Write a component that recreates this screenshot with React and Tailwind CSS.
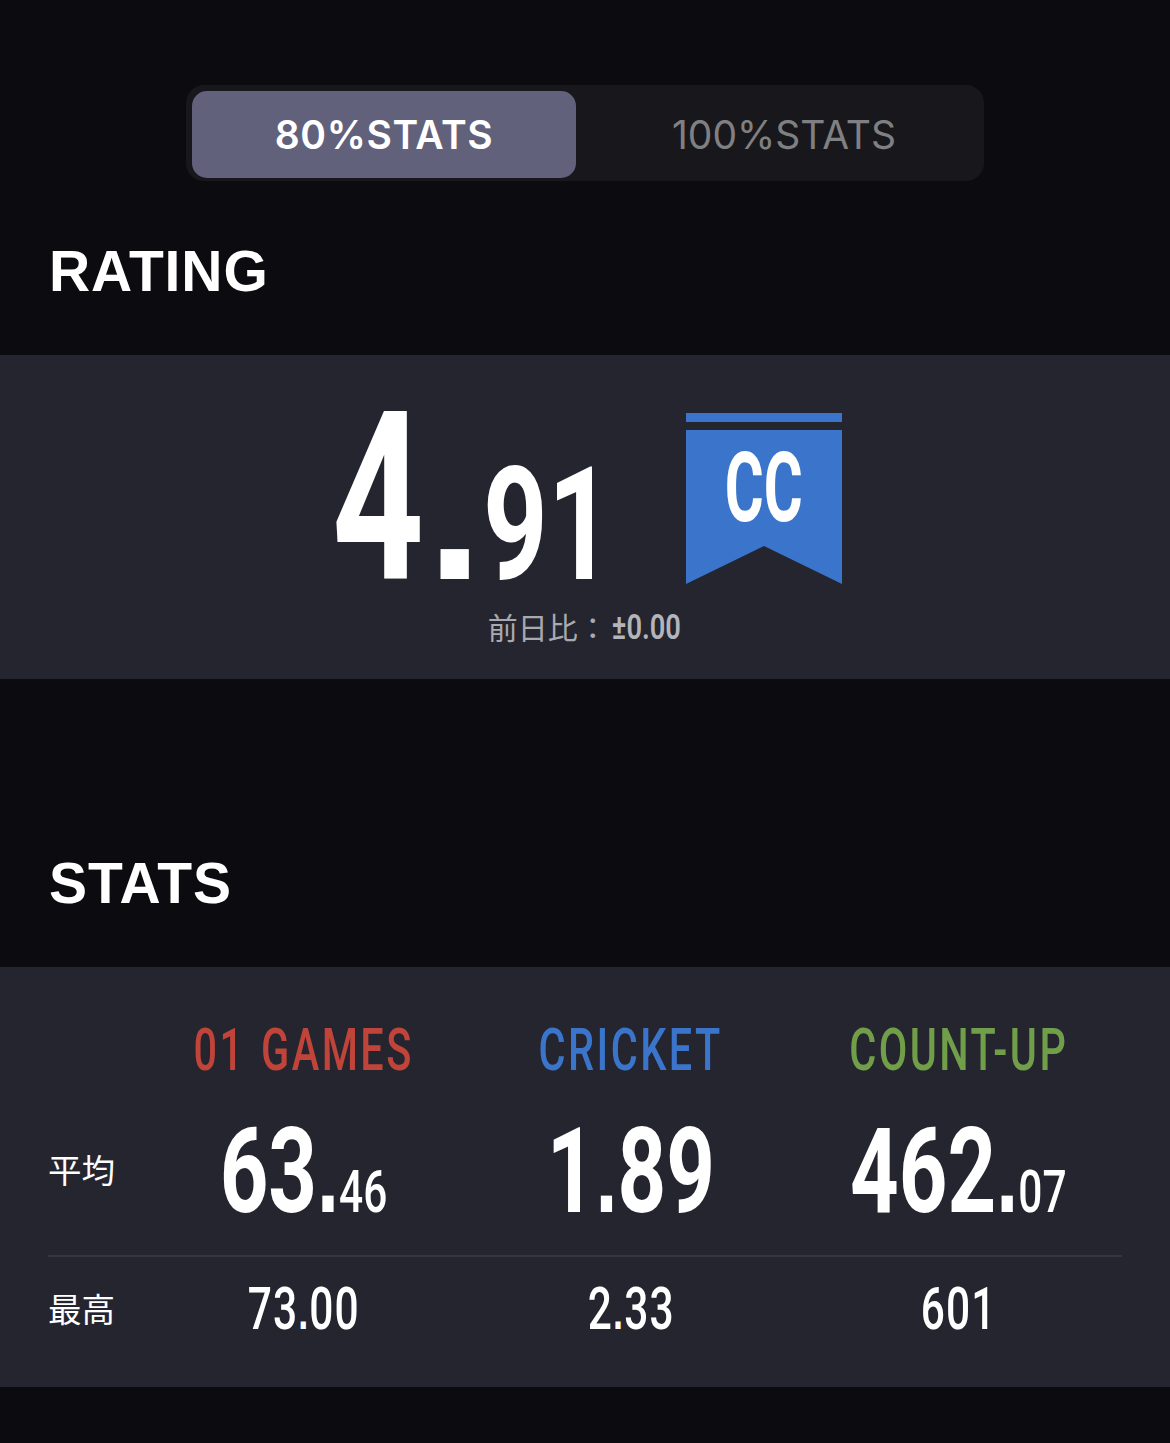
const cond = { fontFamily: 'Roboto, sans-serif' };
const sans = { fontFamily: 'Inter, "Liberation Sans", sans-serif' };
const heading = { fontFamily: '"Liberation Sans", Arial, sans-serif' };
const cjk = { fontFamily: '"Noto Sans CJK JP", sans-serif' };

function Cond({ children, className = '' }) {
  return (
    <span style={cond} className={`inline-block whitespace-nowrap ${className}`}>
      {children}
    </span>
  );
}

function Dot({ className }) {
  return (
    <span style={heading} className={`font-bold ${className}`}>
      .
    </span>
  );
}

function Label({ children, className = '' }) {
  return (
    <div style={cjk} className={`text-[33.5px] leading-none text-white ${className}`}>
      {children}
    </div>
  );
}

function Badge() {
  return (
    <svg width="156" height="171" viewBox="0 0 156 171" className="block">
      <rect x="0" y="0" width="156" height="9" fill="#3a75cb" />
      <path d="M0 17H156V171L78 133L0 171Z" fill="#3a75cb" />
    </svg>
  );
}

function Heading({ children, className }) {
  return (
    <h2 style={heading} className={`pl-[49px] text-[57px] font-bold leading-none tracking-[0.9px] text-white ${className}`}>
      {children}
    </h2>
  );
}

const rows = [
  { title: '01 GAMES', color: 'text-[#c04439]', head: '63', tail: '', sub: '46', best: ['73', '00'] },
  { title: 'CRICKET', color: 'text-[#3a75cb]', head: '1', tail: '89', sub: '', best: ['2', '33'] },
  { title: 'COUNT-UP', color: 'text-[#719f49]', head: '462', tail: '', sub: '07', best: ['601'] },
];

export default function App() {
  return (
    <div className="min-h-[1443px] w-full bg-[#0b0b10] pt-[85px]">
      <div className="mx-auto flex h-[96px] w-[798px] rounded-[18px] bg-[#18181c] p-[6px] pb-[3px]">
        <div style={sans} className="flex h-[87px] w-[384px] items-center justify-center rounded-[15px] bg-[#62617c] pt-[2px] text-[39px] font-semibold tracking-[0.6px] text-white">
          80%STATS
        </div>
        <div style={sans} className="flex h-[87px] flex-1 items-center justify-center pl-[14px] pt-[2px] text-[39px] font-normal text-[#808083]">
          100%STATS
        </div>
      </div>

      <Heading className="pb-[55px] pt-[62px]">RATING</Heading>

      <section className="h-[324px] bg-[#24252f] pt-[14px]">
        <div className="flex justify-center pl-[6px]">
          <div className="mt-[30px] flex h-[159px] w-[352px] items-baseline text-white">
            <div className="-ml-[2px] w-[95px]">
              <Cond className="origin-left scale-x-[0.68] text-[236px] font-bold leading-[200px]">4</Cond>
            </div>
            <Dot className="text-[200px] leading-[160px]" />
            <div className="w-[131px]">
              <Cond className="origin-left scale-x-[0.72] text-[157px] font-bold leading-none">91</Cond>
            </div>
          </div>
          <div className="relative mt-[44px]">
            <Badge />
            <div className="absolute left-0 right-0 top-[27px] flex justify-center">
              <Cond className="scale-x-[0.62] text-[96px] font-bold leading-none text-white">CC</Cond>
            </div>
          </div>
        </div>
        <div className="mt-[22px] flex items-center justify-center pl-[8px]">
          <span style={cjk} className="text-[30px] leading-none text-[#a9aab0]">前日比：</span>
          <Cond className="-ml-[6px] mt-[4px] scale-x-[0.78] text-[35px] font-semibold leading-none text-[#b4b5ba]">±0.00</Cond>
        </div>
      </section>

      <Heading className="pb-[55px] pt-[176px]">STATS</Heading>

      <section className="h-[420px] bg-[#24252f] px-[48px]">
        <div className="grid h-[132px] grid-cols-[92px_1fr_1fr_1fr] items-center pt-[34px]">
          <div />
          {rows.map((r) => (
            <div key={r.title} className="flex justify-center">
              <Cond className={`scale-x-[0.69] text-[60px] font-medium leading-none tracking-[0.06em] [word-spacing:4px] ${r.color}`}>{r.title}</Cond>
            </div>
          ))}
        </div>
        <div className="grid h-[158px] grid-cols-[92px_1fr_1fr_1fr] items-center border-b-2 border-[#363643] pb-[10px]">
          <Label className="mb-[6px]">平均</Label>
          {rows.map((r) => (
            <div key={r.title} className="flex justify-center">
              <Cond className="scale-x-[0.72] font-bold leading-none text-white">
                <span className="text-[118px]">{r.head}</span>
                <Dot className="text-[110px]" />
                {r.tail && <span className="text-[118px]">{r.tail}</span>}
                {r.sub && <span className="text-[59px] font-medium">{r.sub}</span>}
              </Cond>
            </div>
          ))}
        </div>
        <div className="grid h-[130px] grid-cols-[92px_1fr_1fr_1fr] items-center pb-[28px]">
          <Label>最高</Label>
          {rows.map((r) => (
            <div key={r.title} className="flex justify-center">
              <Cond className="scale-x-[0.72] text-[59px] font-medium leading-none tracking-[1.5px] text-white">
                {r.best[0]}
                {r.best[1] && <Dot className="text-[50px]" />}
                {r.best[1]}
              </Cond>
            </div>
          ))}
        </div>
      </section>
    </div>
  );
}
